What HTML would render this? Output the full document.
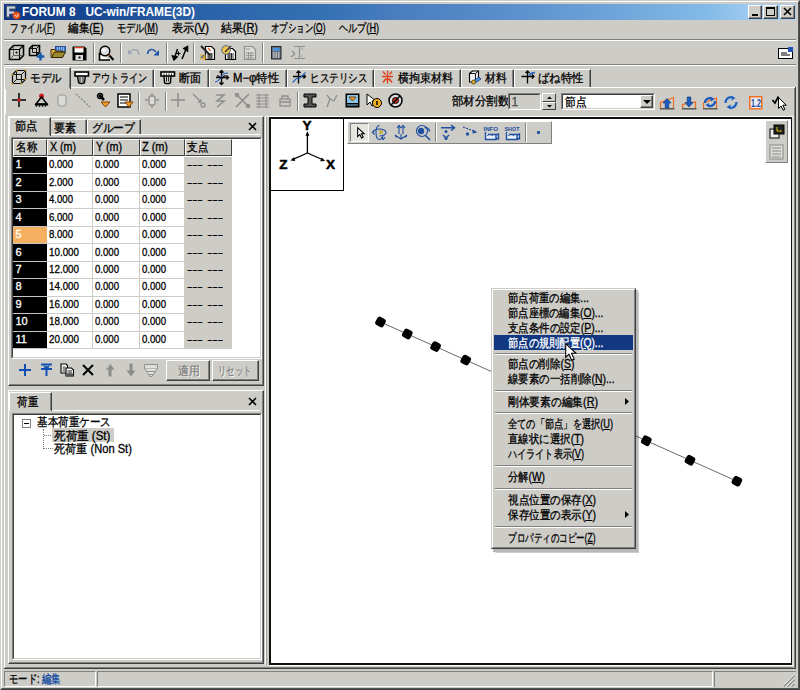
<!DOCTYPE html>
<html><head><meta charset="utf-8">
<style>
*{margin:0;padding:0;box-sizing:border-box}
html,body{width:800px;height:690px;overflow:hidden;background:#cdccc7;font-family:"Liberation Sans",sans-serif;font-size:12px;color:#000}
.a{position:absolute}
.t{position:absolute;white-space:nowrap;line-height:12px;font-size:12px}
.n{font-size:11px}
.t{-webkit-text-stroke:0.3px currentColor}
.hl{position:absolute;height:1px;background:#808080}
.hw{position:absolute;height:1px;background:#fff}
.vl{position:absolute;width:1px;background:#808080}
.vw{position:absolute;width:1px;background:#fff}
svg{position:absolute;overflow:visible}
.cell{position:absolute;height:17.45px;line-height:17px;font-size:11px;padding-left:2px;white-space:nowrap;overflow:hidden}
.mi{position:absolute;left:507px;font-size:12px;line-height:12px;white-space:nowrap}
.ms{position:absolute;left:495px;width:137px;height:1px;background:#808080;border-bottom:1px solid #fff;height:2px}
</style></head><body>
<!-- window frame -->
<div class="a" style="left:0;top:0;width:800px;height:690px;border-top:1px solid #cdccc7;border-left:1px solid #cdccc7;border-right:1px solid #404040;border-bottom:1px solid #404040"></div>
<div class="a" style="left:1px;top:1px;width:798px;height:688px;border-top:1px solid #fff;border-left:1px solid #fff;border-right:1px solid #555;border-bottom:1px solid #555"></div>

<!-- title bar -->
<div class="a" style="left:4px;top:4px;width:792px;height:16px;background:linear-gradient(to right,#0e3680 0%,#1a4a94 12%,#2a62a8 25%,#3470b4 40%,#4a7ec0 50%,#5a90cc 64%,#72aadc 80%,#80b8e6 88%,#9ccaf0 94%,#a6cef2 100%)"></div>
<svg style="left:5px;top:4px" width="16" height="16"><path d="M1.5 2h9v3h-6v2h5v3h-5v3h-3z" fill="#c8d4e8" stroke="#505868" stroke-width="1"/><circle cx="11.5" cy="11.5" r="3.8" fill="#e8501a"/><path d="M10 11l1.5 2 2-3" stroke="#fff" stroke-width="1" fill="none"/></svg>
<div class="t" style="left:22px;top:6px;color:#fff;font-weight:bold;font-size:12px;transform:scaleX(0.9905);transform-origin:0 0;-webkit-text-stroke:0">FORUM 8&nbsp;&nbsp; UC-win/FRAME(3D)</div>
<!-- title buttons -->
<div class="a" style="left:748px;top:5px;width:14px;height:14px;background:#cdccc7;border-top:1px solid #fff;border-left:1px solid #fff;border-right:1px solid #404040;border-bottom:1px solid #404040;box-shadow:inset -1px -1px 0 #808080"></div>
<div class="a" style="left:752px;top:14px;width:6px;height:2px;background:#000"></div>
<div class="a" style="left:763px;top:5px;width:14.5px;height:14px;background:#cdccc7;border-top:1px solid #fff;border-left:1px solid #fff;border-right:1px solid #404040;border-bottom:1px solid #404040;box-shadow:inset -1px -1px 0 #808080"></div>
<div class="a" style="left:766px;top:7px;width:9px;height:9px;border:1px solid #000;border-top:2px solid #000"></div>
<div class="a" style="left:779.5px;top:5px;width:15.5px;height:14px;background:#cdccc7;border-top:1px solid #fff;border-left:1px solid #fff;border-right:1px solid #404040;border-bottom:1px solid #404040;box-shadow:inset -1px -1px 0 #808080"></div>
<svg style="left:783px;top:8px" width="9" height="8"><path d="M1 0L8 7M8 0L1 7" stroke="#000" stroke-width="1.6"/></svg>

<!-- menu -->
<div class="t" style="left:10px;top:22px;transform:scaleX(0.7104);transform-origin:0 0;">ファイル(<u>F</u>)</div>
<div class="t" style="left:68px;top:22px;transform:scaleX(0.8872);transform-origin:0 0;">編集(<u>E</u>)</div>
<div class="t" style="left:117px;top:22px;transform:scaleX(0.7593);transform-origin:0 0;">モデル(<u>M</u>)</div>
<div class="t" style="left:172px;top:22px;transform:scaleX(0.9246);transform-origin:0 0;">表示(<u>V</u>)</div>
<div class="t" style="left:221px;top:22px;transform:scaleX(0.9097);transform-origin:0 0;">結果(<u>R</u>)</div>
<div class="t" style="left:271px;top:22px;transform:scaleX(0.7046);transform-origin:0 0;">オプション(<u>O</u>)</div>
<div class="t" style="left:339px;top:22px;transform:scaleX(0.7594);transform-origin:0 0;">ヘルプ(<u>H</u>)</div>

<!-- separators -->
<div class="hl" style="left:4px;top:39px;width:792px"></div>
<div class="hw" style="left:4px;top:40px;width:792px"></div>
<div class="hl" style="left:4px;top:64px;width:792px"></div>
<div class="hw" style="left:4px;top:65px;width:792px"></div>

<!-- toolbar 1 -->
<svg style="left:8px;top:44px" width="17" height="17" fill="none" stroke="#000"><path d="M1.5 5.5L5.5 1.5H15.5V11.5L11.5 15.5H1.5Z" stroke-width="1.6"/><path d="M1.5 5.5H11.5V15.5M11.5 5.5L15.5 1.5" stroke-width="1.1"/><path d="M5.5 1.5V11.5H15.5M5.5 11.5L1.5 15.5" stroke-width="0.8" stroke="#444"/><circle cx="8.5" cy="8.5" r="1" fill="#000" stroke="none"/></svg>
<svg style="left:28px;top:44px" width="18" height="17" fill="none" stroke="#000"><path d="M1.5 4.5L4.5 1.5H11.5V8.5L8.5 11.5H1.5Z" stroke-width="1.6"/><path d="M1.5 4.5H8.5V11.5M8.5 4.5L11.5 1.5M4.5 1.5V8.5H11.5" stroke-width="0.9"/><path d="M12.5 8.5v8M8.8 12.5h7.5" stroke="#1a58b0" stroke-width="2.4"/></svg>
<svg style="left:50px;top:45px" width="17" height="14"><rect x="5.5" y="1.5" width="10" height="5" fill="#3a78d0" stroke="#1a3c80" stroke-width="0.8"/><path d="M7 3h1M9 3h1M11 3h1M13 3h1M7 5h1M9 5h1M11 5h1M13 5h1" stroke="#fff" stroke-width="0.9"/><path d="M1 4.5h4l1 1.5h6v6.5H1z" fill="#d8b040" stroke="#403010" stroke-width="1"/><path d="M1.5 12.5l3-5.5h11l-3 5.5z" fill="#9c8c30" stroke="#302000" stroke-width="1"/></svg>
<svg style="left:71.5px;top:45.5px" width="15" height="15"><path d="M0.5 0.5h12l2 2v12h-14z" fill="#000"/><rect x="2.5" y="1" width="9" height="5.5" fill="#fff"/><rect x="2.5" y="1" width="9" height="1.3" fill="#e04020"/><rect x="3.5" y="9" width="7.5" height="5" fill="#ddd"/><rect x="6.5" y="10.5" width="2" height="2" fill="#000"/></svg>
<div class="vl" style="left:93px;top:43px;height:20px"></div><div class="vw" style="left:94px;top:43px;height:20px"></div>
<svg style="left:97.5px;top:44.5px" width="17" height="17"><path d="M1.5 7.5v7.5h10.5" fill="#fff" stroke="#000" stroke-width="1.6"/><path d="M1.5 9.5h9" stroke="#000" stroke-width="1"/><circle cx="7" cy="6" r="4.8" fill="#dcdcdc" stroke="#000" stroke-width="1.4"/><circle cx="6" cy="5" r="1.8" fill="#fff"/><path d="M10.5 9.5l5 5.5" stroke="#000" stroke-width="2"/><path d="M10 11l2-1" stroke="#e07020" stroke-width="1"/></svg>
<div class="vl" style="left:120px;top:43px;height:20px"></div><div class="vw" style="left:121px;top:43px;height:20px"></div>
<svg style="left:126.5px;top:47px" width="14" height="11" fill="none" stroke="#9aa4b4" stroke-width="1.3"><path d="M3 5c3-4 9-3 9 3"/><path d="M1 2.5v4.5h4.5z" fill="#9aa4b4" stroke="none"/></svg>
<svg style="left:146px;top:47px" width="14" height="11" fill="none" stroke="#1a50a8" stroke-width="1.5"><path d="M10 5C7 1 2 2 1.5 7"/><path d="M13 3v5.5H7.5z" fill="#1a50a8" stroke="none"/></svg>
<div class="vl" style="left:166px;top:43px;height:20px"></div><div class="vw" style="left:167px;top:43px;height:20px"></div>
<svg style="left:172px;top:46px" width="17" height="15" fill="none" stroke="#000" stroke-width="1.5"><path d="M2 13.5L5.5 3M10 13L14.5 2"/><path d="M0.5 10l1.5 4 3-3z" fill="#000"/><path d="M12 2.5L15.5 0.5 15.5 5z" fill="#000"/><path d="M4.5 7.5h4M6.5 5.5v4" stroke-width="1.2"/></svg>
<div class="vl" style="left:193px;top:43px;height:20px"></div><div class="vw" style="left:194px;top:43px;height:20px"></div>
<svg style="left:199.5px;top:45px" width="16" height="16"><path d="M5.5 1.5h6l3 3v10h-9z" fill="#fff" stroke="#000" stroke-width="1.2"/><path d="M7 9h6M7 11h6M7 13h6M9 8v6M11 8v6" stroke="#000" stroke-width="0.8"/><path d="M1 1l9 9" stroke="#222" stroke-width="2"/><path d="M0.5 9.5h5v5h-5z" fill="#e8b030"/><path d="M1 13l3-3" stroke="#3070c0" stroke-width="1.2"/><path d="M8 3l3 3" stroke="#e06020" stroke-width="1.2"/></svg>
<svg style="left:220.5px;top:45px" width="16" height="16"><path d="M4.5 3.5h7l3 3v8h-10z" fill="#fff" stroke="#000" stroke-width="1.2"/><path d="M6 9h7M6 11h7M6 13h7M8 8v6M10.5 8v6" stroke="#000" stroke-width="0.8"/><circle cx="5" cy="5" r="4.3" fill="#f0c850" stroke="#506080" stroke-width="1"/><path d="M4 7L10 1" stroke="#333" stroke-width="1.5"/></svg>
<svg style="left:242.5px;top:45px" width="14" height="16" opacity="0.5"><path d="M1.5 1.5h8l3 3v10h-11z" fill="#e8e8e8" stroke="#555" stroke-width="1.2"/><path d="M3 8h8M3 10.5h8M3 13h8M5.5 7v7M8 7v7M3 4h4" stroke="#555" stroke-width="0.9"/></svg>
<div class="vl" style="left:262px;top:43px;height:20px"></div><div class="vw" style="left:263px;top:43px;height:20px"></div>
<svg style="left:271px;top:45.5px" width="11" height="14"><rect x="0.5" y="0.5" width="9.5" height="12.5" fill="#686c78" stroke="#202430"/><rect x="2" y="2" width="6.5" height="3" fill="#4a90e0"/><path d="M2 7h1.5M4.5 7h1.5M7 7h1.5M2 9h1.5M4.5 9h1.5M7 9h1.5M2 11h1.5M4.5 11h1.5M7 11h1.5" stroke="#fff" stroke-width="1.1"/></svg>
<svg style="left:289.5px;top:45px" width="16" height="16" opacity="0.5" fill="none" stroke="#555" stroke-width="1.2"><path d="M4 1.5h11M9.5 1.5v12M4 13.5h11M2 6l3 3M1 12l4-3"/><path d="M11 4h2M11 11h2" stroke-width="0.8"/></svg>
<svg style="left:778px;top:47px" width="16" height="12"><rect x="0.5" y="1.5" width="14" height="10" fill="#fff" stroke="#000"/><path d="M3 6h6M3 8h9" stroke="#000"/><rect x="10" y="0" width="5" height="5" fill="#2050b0"/></svg>

<!-- main tab strip -->
<!-- page panel -->
<div class="a" style="left:5px;top:87px;width:791px;height:27px;border-top:1px solid #fff;border-left:1px solid #fff;border-right:1px solid #404040"></div>
<div class="vl" style="left:794px;top:88px;height:26px"></div>
<!-- inactive tabs -->
<div class="a" style="left:70px;top:69px;width:84px;height:18px;border-top:1px solid #fff;border-right:1px solid #404040"></div>
<div class="vl" style="left:152px;top:70px;height:17px"></div>
<div class="a" style="left:154px;top:69px;width:55px;height:18px;border-top:1px solid #fff;border-left:1px solid #fff;border-right:1px solid #404040"></div>
<div class="vl" style="left:207px;top:70px;height:17px"></div>
<div class="a" style="left:209px;top:69px;width:78px;height:18px;border-top:1px solid #fff;border-left:1px solid #fff;border-right:1px solid #404040"></div>
<div class="vl" style="left:285px;top:70px;height:17px"></div>
<div class="a" style="left:287px;top:69px;width:87px;height:18px;border-top:1px solid #fff;border-left:1px solid #fff;border-right:1px solid #404040"></div>
<div class="vl" style="left:372px;top:70px;height:17px"></div>
<div class="a" style="left:374px;top:69px;width:87px;height:18px;border-top:1px solid #fff;border-left:1px solid #fff;border-right:1px solid #404040"></div>
<div class="vl" style="left:459px;top:70px;height:17px"></div>
<div class="a" style="left:461px;top:69px;width:53px;height:18px;border-top:1px solid #fff;border-left:1px solid #fff;border-right:1px solid #404040"></div>
<div class="vl" style="left:512px;top:70px;height:17px"></div>
<div class="a" style="left:514px;top:69px;width:77px;height:18px;border-top:1px solid #fff;border-left:1px solid #fff;border-right:1px solid #404040"></div>
<div class="vl" style="left:589px;top:70px;height:17px"></div>
<!-- active tab -->
<div class="a" style="left:4px;top:67px;width:67px;height:22px;border-top-left-radius:2px;background:#cdccc7;border-top:1px solid #fff;border-left:1px solid #fff;border-right:1px solid #404040"></div>
<div class="vl" style="left:69px;top:68px;height:20px"></div>

<svg style="left:11px;top:69px" width="16" height="16" fill="none" stroke="#000" stroke-width="1.2"><path d="M1.5 5.5L5.5 1.5H14.5V10.5L10.5 14.5H1.5Z"/><path d="M1.5 5.5H10.5V14.5M10.5 5.5L14.5 1.5M5.5 1.5V10.5H14.5M5.5 10.5L1.5 14.5" stroke-width="0.9"/><g fill="#c0a020" stroke="none"><circle cx="1.5" cy="5.5" r="1.1"/><circle cx="5.5" cy="1.5" r="1.1"/><circle cx="14.5" cy="1.5" r="1.1"/><circle cx="14.5" cy="10.5" r="1.1"/><circle cx="10.5" cy="14.5" r="1.1"/><circle cx="1.5" cy="14.5" r="1.1"/></g></svg>
<div class="t" style="left:30px;top:72px;transform:scaleX(0.8750);transform-origin:0 0;">モデル</div>
<svg style="left:73.5px;top:71px" width="16" height="14" fill="none" stroke="#000"><rect x="1" y="1" width="13.5" height="4" fill="#fff" stroke-width="1.6"/><path d="M3.5 5l1 6c0 2 6 2 6 0l1-6" stroke-width="1.4"/><path d="M6 6v5M9 6v5" stroke-width="0.8"/></svg>
<div class="t" style="left:92.4px;top:72px;transform:scaleX(0.7639);transform-origin:0 0;">アウトライン</div>
<svg style="left:160px;top:71px" width="16" height="14" fill="none" stroke="#000"><rect x="1" y="1" width="13.5" height="4" fill="#fff" stroke-width="1.6"/><path d="M4 2.5v2M6.5 2.5v2M9 2.5v2M11.5 2.5v2" stroke-width="0.8"/><path d="M4 5l0.5 6.5c0 1.5 6 1.5 6 0l0.5-6.5" stroke-width="1.4"/><path d="M6.5 6v4.5M8.5 6v4.5" stroke-width="0.8"/></svg>
<div class="t" style="left:178.5px;top:72px;transform:scaleX(0.9167);transform-origin:0 0;">断面</div>
<svg style="left:213.5px;top:70px" width="16" height="15" fill="none" stroke="#000" stroke-width="1.3"><path d="M7.5 0.5v14M5.5 2.5l2-2 2 2M5.5 12.5l2 2 2-2M2 7.5h12.5M12.5 5.5l2 2-2 2"/><path d="M1 12c3 0 4-2 6-5s3-4 7-4" stroke="#2060c0" stroke-width="1.1"/><path d="M3 6c2-1 3 3 5 2s2-3 4-2" stroke-width="1.1"/></svg>
<div class="t" style="left:232.5px;top:72px;transform:scaleX(0.9427);transform-origin:0 0;">M−φ特性</div>
<svg style="left:292px;top:70px" width="16" height="14" fill="none" stroke="#000" stroke-width="1.3"><path d="M6.5 1v12.5M4.5 3l2-2 2 2M1 6.5h12.5M11.5 4.5l2 2-2 2"/><path d="M0.5 12.5l4-4h3l6-6" stroke="#2060c0" stroke-width="1.1"/></svg>
<div class="t" style="left:310px;top:72px;transform:scaleX(0.7917);transform-origin:0 0;">ヒステリシス</div>
<svg style="left:381px;top:70px" width="13" height="14" fill="none" stroke="#e04018" stroke-width="1.3"><path d="M6.5 0.5v13M2 1.5l2.5 3M11 1.5l-2.5 3M1 6.5h11M2 12.5l3-4M11 12.5l-3-4M4 9.5h5" /></svg>
<div class="t" style="left:398.4px;top:72px;transform:scaleX(0.9167);transform-origin:0 0;">横拘束材料</div>
<svg style="left:468px;top:69.5px" width="14" height="15"><path d="M1.5 3.5l3-2.5h6v8l-3 3h-6z" fill="#eceef4" stroke="#000" stroke-width="1.1"/><path d="M1.5 3.5h6v9M7.5 3.5l3-2.5" fill="none" stroke="#000" stroke-width="0.9"/><path d="M5 11l6-4 2 2-6 4z" fill="#4a90e0" stroke="#103070" stroke-width="0.8"/><circle cx="5.5" cy="12" r="2" fill="#e0b020" stroke="#403000" stroke-width="0.7"/></svg>
<div class="t" style="left:485.4px;top:72px;transform:scaleX(0.9000);transform-origin:0 0;">材料</div>
<svg style="left:520.5px;top:70px" width="15" height="14" fill="none" stroke="#000" stroke-width="1.3"><path d="M6.5 1v12.5M4.5 3l2-2 2 2M0.5 6.5h12.5M11 4.5l2 2-2 2"/><path d="M8 5.5c1.5-2 3-3 6-3" stroke="#2060c0" stroke-width="1.3"/></svg>
<div class="t" style="left:537.6px;top:72px;transform:scaleX(0.9375);transform-origin:0 0;">ばね特性</div>

<!-- toolbar 2 -->
<svg style="left:12px;top:93px" width="14" height="14"><path d="M7 0v14M0 7h14" stroke="#000" stroke-width="1.5"/><rect x="5.5" y="5.5" width="3" height="3" fill="#d02020"/></svg>
<svg style="left:34px;top:93px" width="15" height="15"><circle cx="7.5" cy="3" r="2.5" fill="#d02020"/><path d="M7.5 4L2 11h11z" fill="none" stroke="#000" stroke-width="1.5"/><path d="M1 11.5h13" stroke="#000" stroke-width="2"/><path d="M2 14l1-2M5 14l1-2M8 14l1-2M11 14l1-2" stroke="#000"/></svg>
<svg style="left:57px;top:94px" width="10" height="13" opacity="0.45"><rect x="1" y="1" width="8" height="11" rx="2" fill="#eee" stroke="#555"/></svg>
<svg style="left:75px;top:93px" width="16" height="15" opacity="0.45" fill="none" stroke="#444" stroke-width="1.5"><path d="M1 1l14 13" stroke-dasharray="2 1.5"/></svg>
<svg style="left:97px;top:93px" width="14" height="15"><path d="M2 2l5 5" stroke="#000" stroke-width="2.5"/><path d="M4 9h9l-4.5 5z" fill="#f0a020" stroke="#804000"/><circle cx="3" cy="3" r="2.5" fill="none" stroke="#000" stroke-width="1.5"/></svg>
<svg style="left:117px;top:93px" width="16" height="15"><rect x="1" y="1" width="12" height="13" fill="#fff" stroke="#000" stroke-width="1.5"/><path d="M3 4h8M3 7h8M3 10h8" stroke="#000"/><path d="M8 9h8l-4 5z" fill="#f0a020" stroke="#804000"/></svg>
<div class="vl" style="left:138px;top:92px;height:19px"></div><div class="vw" style="left:139px;top:92px;height:19px"></div>
<svg style="left:145px;top:93px" width="14" height="15" opacity="0.4"><rect x="4" y="3" width="6" height="9" rx="2" fill="#eee" stroke="#333" stroke-width="1.3"/><path d="M0 7h4M10 7h4M7 0v3M7 12v3" stroke="#333" stroke-width="1.3"/></svg>
<div class="vl" style="left:165px;top:92px;height:19px"></div><div class="vw" style="left:166px;top:92px;height:19px"></div>
<svg style="left:171px;top:93px" width="14" height="14" opacity="0.4"><path d="M7 0v14M0 7h14" stroke="#333" stroke-width="1.5"/></svg>
<svg style="left:192px;top:93px" width="14" height="15" opacity="0.4" fill="none" stroke="#333" stroke-width="1.3"><path d="M1 1l8 8M9 9v-3M9 9h-3"/><circle cx="11" cy="12" r="2"/></svg>
<svg style="left:214px;top:93px" width="12" height="15" opacity="0.4" fill="none" stroke="#333" stroke-width="1.6"><path d="M2 2h8L3 8h7l-7 6"/></svg>
<svg style="left:235px;top:93px" width="15" height="15" opacity="0.4" fill="none" stroke="#333" stroke-width="1.6"><path d="M1 1l13 13M14 1L1 14"/><circle cx="2" cy="2" r="1.5"/><circle cx="13" cy="13" r="1.5"/></svg>
<svg style="left:255px;top:93px" width="15" height="15" opacity="0.4" fill="none" stroke="#333" stroke-width="1.2"><path d="M1 2h13M1 5h13M1 8h13M1 11h13M1 14h13M4 1v14M11 1v14"/></svg>
<svg style="left:279px;top:94px" width="12" height="13" opacity="0.4" fill="none" stroke="#333" stroke-width="1.3"><rect x="1" y="5" width="10" height="7"/><path d="M3 5V2h6v3M1 8h10"/></svg>
<div class="vl" style="left:297px;top:92px;height:19px"></div><div class="vw" style="left:298px;top:92px;height:19px"></div>
<svg style="left:303px;top:93px" width="14" height="15"><path d="M1 1h12v3H9v7h4v3H1v-3h4V4H1z" fill="#555" stroke="#000"/></svg>
<svg style="left:325px;top:93px" width="14" height="15" opacity="0.4" fill="none" stroke="#333" stroke-width="1.3"><path d="M2 14l3-8 4 2 3-6M5 6l-3-4"/></svg>
<svg style="left:345px;top:93px" width="15" height="15"><rect x="0.5" y="0.5" width="14" height="14" fill="#000"/><rect x="2" y="2" width="11" height="8" fill="#8ac4e8"/><path d="M4 4h7l-3.5 4z" fill="#f0a020" stroke="#603000" stroke-width="0.8"/><path d="M2 12h11" stroke="#8ac4e8"/></svg>
<svg style="left:366px;top:93px" width="16" height="15"><path d="M1 1v11l3-3 2 4 2-1-2-4h4z" fill="#fff" stroke="#000"/><circle cx="11" cy="10" r="4.5" fill="#f0b020" stroke="#000"/><path d="M11 8v4" stroke="#000" stroke-width="1.5"/></svg>
<svg style="left:388px;top:93px" width="15" height="15"><circle cx="7.5" cy="7.5" r="6.5" fill="#ddd" stroke="#000" stroke-width="1.5"/><circle cx="7.5" cy="7.5" r="3" fill="#d03020" stroke="#000"/><path d="M3 12l9-9" stroke="#000" stroke-width="1.5"/></svg>

<div class="t" style="left:451.6px;top:95px;transform:scaleX(0.9567);transform-origin:0 0;">部材分割数</div>
<div class="a" style="left:508px;top:93px;width:33px;height:17px;background:#cdccc7;border-top:1px solid #808080;border-left:1px solid #808080;border-right:1px solid #fff;border-bottom:1px solid #fff"></div>
<div class="a" style="left:509px;top:94px;width:31px;height:15px;border-top:1px solid #404040;border-left:1px solid #404040;border-right:1px solid #cdccc7;border-bottom:1px solid #cdccc7"></div>
<div class="t" style="left:511.5px;top:96px;color:#505050">1</div>
<div class="a" style="left:542px;top:93px;width:14px;height:8.5px;border-top:1px solid #fff;border-left:1px solid #fff;border-right:1px solid #404040;border-bottom:1px solid #404040"></div>
<div class="a" style="left:542px;top:101.5px;width:14px;height:8.5px;border-top:1px solid #fff;border-left:1px solid #fff;border-right:1px solid #404040;border-bottom:1px solid #404040"></div>
<svg style="left:546px;top:95.5px" width="7" height="13"><path d="M1 3h5L3.5 0.5z M1 9h5L3.5 11.5z" fill="#000"/></svg>
<div class="a" style="left:561px;top:93px;width:94px;height:17px;background:#fff;border-top:1px solid #808080;border-left:1px solid #808080;border-right:1px solid #fff;border-bottom:1px solid #fff"></div>
<div class="a" style="left:562px;top:94px;width:92px;height:15px;border-top:1px solid #404040;border-left:1px solid #404040;border-right:1px solid #cdccc7;border-bottom:1px solid #cdccc7"></div>
<div class="t" style="left:564.5px;top:96px;transform:scaleX(0.8917);transform-origin:0 0;">節点</div>
<div class="a" style="left:640px;top:95px;width:13px;height:13px;background:#cdccc7;border-top:1px solid #fff;border-left:1px solid #fff;border-right:1px solid #404040;border-bottom:1px solid #404040;box-shadow:inset -1px -1px 0 #808080"></div>
<svg style="left:643px;top:100px" width="8" height="4"><path d="M0 0h8L4 4z" fill="#000"/></svg>

<svg style="left:659px;top:95.5px" width="16" height="14"><path d="M1.5 12V6.5L14.5 1.5V12" fill="none" stroke="#f06a20" stroke-width="1.2"/><path d="M8 2.5l4 4.5H9.8v5H6.2V7H4z" fill="#1a5cc0" stroke="#0a3070" stroke-width="0.6"/><path d="M1 12.8h14.5" stroke="#505050" stroke-width="1.4"/></svg>
<svg style="left:680.5px;top:95.5px" width="16" height="14"><path d="M1.5 12V8.5L14.5 6V12" fill="none" stroke="#f06a20" stroke-width="1.2"/><path d="M6.2 1h3.6v5.5H12l-4 4.5-4-4.5h2.2z" fill="#1a5cc0" stroke="#0a3070" stroke-width="0.6"/><path d="M1 12.8h14.5" stroke="#505050" stroke-width="1.4"/></svg>
<svg style="left:702px;top:94.5px" width="16" height="15"><path d="M1.5 13V8L14.5 3V13" fill="none" stroke="#f06a20" stroke-width="1.2"/><path d="M3 8c0-4 4-6 7-4" fill="none" stroke="#1a5cc0" stroke-width="2.2"/><path d="M8.5 1.5l4 2.5-3.5 2.5z" fill="#1a5cc0"/><path d="M13 6c0 4-4 6-7 4.5" fill="none" stroke="#1a5cc0" stroke-width="2.2"/><path d="M7.5 12.5l-4-2.5 3.5-2z" fill="#1a5cc0"/><path d="M1 13.8h14.5" stroke="#505050" stroke-width="1.4"/></svg>
<svg style="left:723px;top:94.5px" width="16" height="15"><path d="M2.5 8c0-4 3-6.5 7-5.5" fill="none" stroke="#1a5cc0" stroke-width="2.2"/><path d="M8 0.5l4.5 2.5-4 2.5z" fill="#1a5cc0"/><path d="M13.5 7c0 4-3 6.5-7 5.5" fill="none" stroke="#1a5cc0" stroke-width="2.2"/><path d="M8 14.5l-4.5-2.5 4-2.5z" fill="#1a5cc0"/><path d="M5 6c1-2 3-2.5 4-2M11 9c-1 2-3 2.5-4 2" stroke="#9cc4f0" stroke-width="0.8" fill="none"/></svg>
<svg style="left:749px;top:95.5px" width="14" height="14"><rect x="0.75" y="0.75" width="12" height="12" fill="#e8ecf4" stroke="#f07020" stroke-width="1.5"/><text x="2" y="11" font-size="10.5" font-family="Liberation Sans" fill="#1a4ca8" font-weight="bold" textLength="10" lengthAdjust="spacingAndGlyphs">1.2</text></svg>
<svg style="left:772px;top:94.5px" width="16" height="16"><path d="M0.5 5l2.5 3 3.5-6.5" fill="none" stroke="#000" stroke-width="1.8"/><path d="M6.5 2.5v11l2.6-2.5 2 4.2 1.7-0.8-2-4.2h3.5z" fill="#fff" stroke="#000" stroke-width="1"/></svg>

<!-- LEFT PANEL (nodes) -->
<div class="a" style="left:8px;top:116px;width:256px;height:270px;border-top:1px solid #fff;border-left:1px solid #fff;border-right:1px solid #404040;border-bottom:1px solid #404040"></div>
<div class="hl" style="left:9px;top:384px;width:254px"></div>
<div class="vl" style="left:262px;top:117px;height:268px"></div>
<!-- panel tabs -->
<div class="a" style="left:10px;top:134px;width:250px;height:1px;background:#fff"></div>
<div class="a" style="left:51px;top:119px;width:36px;height:15px;border-top:1px solid #fff;border-right:1px solid #404040"></div>
<div class="vl" style="left:85px;top:120px;height:14px"></div>
<div class="a" style="left:87px;top:119px;width:54px;height:15px;border-top:1px solid #fff;border-left:1px solid #fff;border-right:1px solid #404040"></div>
<div class="vl" style="left:139px;top:120px;height:14px"></div>
<div class="a" style="left:9px;top:117px;width:42px;height:19px;background:#cdccc7;border-top:1px solid #fff;border-left:1px solid #fff;border-right:1px solid #404040"></div>
<div class="vl" style="left:49px;top:118px;height:17px"></div>
<div class="t" style="left:15px;top:120px;transform:scaleX(0.9375);transform-origin:0 0;">節点</div>
<div class="t" style="left:54px;top:122px;transform:scaleX(0.9167);transform-origin:0 0;">要素</div>
<div class="t" style="left:92.25px;top:122px;transform:scaleX(0.8906);transform-origin:0 0;">グループ</div>
<svg style="left:248px;top:122px" width="9" height="9"><path d="M1 1l7 7M8 1L1 8" stroke="#000" stroke-width="1.6"/></svg>

<!-- grid frame -->
<div class="a" style="left:11px;top:137px;width:251px;height:222px;border-top:1px solid #808080;border-left:1px solid #808080;border-right:1px solid #fff;border-bottom:1px solid #fff"></div>
<div class="a" style="left:12px;top:138px;width:249px;height:220px;background:#fff;border-top:1px solid #404040;border-left:1px solid #404040;border-right:1px solid #cdccc7;border-bottom:1px solid #cdccc7"></div>
<div class="a" style="left:13px;top:139px;width:34px;height:17px;background:#cdccc7;border-top:1px solid #fff;border-left:1px solid #fff;border-right:1px solid #404040;border-bottom:1px solid #404040"></div><div class="t" style="left:15.5px;top:141px;transform:scaleX(0.8750);transform-origin:0 0;">名称</div><div class="a" style="left:47px;top:139px;width:46px;height:17px;background:#cdccc7;border-top:1px solid #fff;border-left:1px solid #fff;border-right:1px solid #404040;border-bottom:1px solid #404040"></div><div class="t" style="left:49.5px;top:141px;transform:scaleX(0.8865);transform-origin:0 0;">X (m)</div><div class="a" style="left:93px;top:139px;width:46.5px;height:17px;background:#cdccc7;border-top:1px solid #fff;border-left:1px solid #fff;border-right:1px solid #404040;border-bottom:1px solid #404040"></div><div class="t" style="left:95.5px;top:141px;transform:scaleX(0.8932);transform-origin:0 0;">Y (m)</div><div class="a" style="left:139.5px;top:139px;width:45.0px;height:17px;background:#cdccc7;border-top:1px solid #fff;border-left:1px solid #fff;border-right:1px solid #404040;border-bottom:1px solid #404040"></div><div class="t" style="left:142.0px;top:141px;transform:scaleX(0.9073);transform-origin:0 0;">Z (m)</div><div class="a" style="left:184.5px;top:139px;width:47.5px;height:17px;background:#cdccc7;border-top:1px solid #fff;border-left:1px solid #fff;border-right:1px solid #404040;border-bottom:1px solid #404040"></div><div class="t" style="left:187.0px;top:141px;transform:scaleX(0.8750);transform-origin:0 0;">支点</div><div class="a" style="left:13px;top:157.00px;width:34px;height:17.45px;background:#000;border-bottom:1px solid #c4c4c4"></div><div class="t n" style="left:15.5px;top:158.30px;color:#fff">1</div><div class="a" style="left:47px;top:157.00px;width:46px;height:17.45px;border-right:1px solid #cdccc7;border-bottom:1px solid #cdccc7"></div><div class="t n" style="left:49.3px;top:158.30px;transform:scaleX(0.8717);transform-origin:0 0;">0.000</div><div class="a" style="left:93px;top:157.00px;width:46.5px;height:17.45px;border-right:1px solid #cdccc7;border-bottom:1px solid #cdccc7"></div><div class="t n" style="left:95.3px;top:158.30px;transform:scaleX(0.8717);transform-origin:0 0;">0.000</div><div class="a" style="left:139.5px;top:157.00px;width:45.0px;height:17.45px;border-right:1px solid #cdccc7;border-bottom:1px solid #cdccc7"></div><div class="t n" style="left:141.8px;top:158.30px;transform:scaleX(0.8717);transform-origin:0 0;">0.000</div><div class="a" style="left:184.5px;top:157.00px;width:47.5px;height:17.45px;background:#cdccc7;border-bottom:1px solid #cdccc7"></div><div class="t n" style="left:187px;top:158.30px;transform:scaleX(1.4373);transform-origin:0 0;">--- ---</div><div class="a" style="left:13px;top:174.45px;width:34px;height:17.45px;background:#000;border-bottom:1px solid #c4c4c4"></div><div class="t n" style="left:15.5px;top:175.75px;color:#fff">2</div><div class="a" style="left:47px;top:174.45px;width:46px;height:17.45px;border-right:1px solid #cdccc7;border-bottom:1px solid #cdccc7"></div><div class="t n" style="left:49.3px;top:175.75px;transform:scaleX(0.8717);transform-origin:0 0;">2.000</div><div class="a" style="left:93px;top:174.45px;width:46.5px;height:17.45px;border-right:1px solid #cdccc7;border-bottom:1px solid #cdccc7"></div><div class="t n" style="left:95.3px;top:175.75px;transform:scaleX(0.8717);transform-origin:0 0;">0.000</div><div class="a" style="left:139.5px;top:174.45px;width:45.0px;height:17.45px;border-right:1px solid #cdccc7;border-bottom:1px solid #cdccc7"></div><div class="t n" style="left:141.8px;top:175.75px;transform:scaleX(0.8717);transform-origin:0 0;">0.000</div><div class="a" style="left:184.5px;top:174.45px;width:47.5px;height:17.45px;background:#cdccc7;border-bottom:1px solid #cdccc7"></div><div class="t n" style="left:187px;top:175.75px;transform:scaleX(1.4373);transform-origin:0 0;">--- ---</div><div class="a" style="left:13px;top:191.91px;width:34px;height:17.45px;background:#000;border-bottom:1px solid #c4c4c4"></div><div class="t n" style="left:15.5px;top:193.21px;color:#fff">3</div><div class="a" style="left:47px;top:191.91px;width:46px;height:17.45px;border-right:1px solid #cdccc7;border-bottom:1px solid #cdccc7"></div><div class="t n" style="left:49.3px;top:193.21px;transform:scaleX(0.8717);transform-origin:0 0;">4.000</div><div class="a" style="left:93px;top:191.91px;width:46.5px;height:17.45px;border-right:1px solid #cdccc7;border-bottom:1px solid #cdccc7"></div><div class="t n" style="left:95.3px;top:193.21px;transform:scaleX(0.8717);transform-origin:0 0;">0.000</div><div class="a" style="left:139.5px;top:191.91px;width:45.0px;height:17.45px;border-right:1px solid #cdccc7;border-bottom:1px solid #cdccc7"></div><div class="t n" style="left:141.8px;top:193.21px;transform:scaleX(0.8717);transform-origin:0 0;">0.000</div><div class="a" style="left:184.5px;top:191.91px;width:47.5px;height:17.45px;background:#cdccc7;border-bottom:1px solid #cdccc7"></div><div class="t n" style="left:187px;top:193.21px;transform:scaleX(1.4373);transform-origin:0 0;">--- ---</div><div class="a" style="left:13px;top:209.36px;width:34px;height:17.45px;background:#000;border-bottom:1px solid #c4c4c4"></div><div class="t n" style="left:15.5px;top:210.66px;color:#fff">4</div><div class="a" style="left:47px;top:209.36px;width:46px;height:17.45px;border-right:1px solid #cdccc7;border-bottom:1px solid #cdccc7"></div><div class="t n" style="left:49.3px;top:210.66px;transform:scaleX(0.8717);transform-origin:0 0;">6.000</div><div class="a" style="left:93px;top:209.36px;width:46.5px;height:17.45px;border-right:1px solid #cdccc7;border-bottom:1px solid #cdccc7"></div><div class="t n" style="left:95.3px;top:210.66px;transform:scaleX(0.8717);transform-origin:0 0;">0.000</div><div class="a" style="left:139.5px;top:209.36px;width:45.0px;height:17.45px;border-right:1px solid #cdccc7;border-bottom:1px solid #cdccc7"></div><div class="t n" style="left:141.8px;top:210.66px;transform:scaleX(0.8717);transform-origin:0 0;">0.000</div><div class="a" style="left:184.5px;top:209.36px;width:47.5px;height:17.45px;background:#cdccc7;border-bottom:1px solid #cdccc7"></div><div class="t n" style="left:187px;top:210.66px;transform:scaleX(1.4373);transform-origin:0 0;">--- ---</div><div class="a" style="left:13px;top:226.82px;width:34px;height:17.45px;background:#f4b060;border-bottom:1px solid #c4c4c4"></div><div class="t n" style="left:15.5px;top:228.12px;color:#fff">5</div><div class="a" style="left:47px;top:226.82px;width:46px;height:17.45px;border-right:1px solid #cdccc7;border-bottom:1px solid #cdccc7"></div><div class="t n" style="left:49.3px;top:228.12px;transform:scaleX(0.8717);transform-origin:0 0;">8.000</div><div class="a" style="left:93px;top:226.82px;width:46.5px;height:17.45px;border-right:1px solid #cdccc7;border-bottom:1px solid #cdccc7"></div><div class="t n" style="left:95.3px;top:228.12px;transform:scaleX(0.8717);transform-origin:0 0;">0.000</div><div class="a" style="left:139.5px;top:226.82px;width:45.0px;height:17.45px;border-right:1px solid #cdccc7;border-bottom:1px solid #cdccc7"></div><div class="t n" style="left:141.8px;top:228.12px;transform:scaleX(0.8717);transform-origin:0 0;">0.000</div><div class="a" style="left:184.5px;top:226.82px;width:47.5px;height:17.45px;background:#cdccc7;border-bottom:1px solid #cdccc7"></div><div class="t n" style="left:187px;top:228.12px;transform:scaleX(1.4373);transform-origin:0 0;">--- ---</div><div class="a" style="left:13px;top:244.27px;width:34px;height:17.45px;background:#000;border-bottom:1px solid #c4c4c4"></div><div class="t n" style="left:15.5px;top:245.57px;color:#fff">6</div><div class="a" style="left:47px;top:244.27px;width:46px;height:17.45px;border-right:1px solid #cdccc7;border-bottom:1px solid #cdccc7"></div><div class="t n" style="left:49.3px;top:245.57px;transform:scaleX(0.8914);transform-origin:0 0;">10.000</div><div class="a" style="left:93px;top:244.27px;width:46.5px;height:17.45px;border-right:1px solid #cdccc7;border-bottom:1px solid #cdccc7"></div><div class="t n" style="left:95.3px;top:245.57px;transform:scaleX(0.8717);transform-origin:0 0;">0.000</div><div class="a" style="left:139.5px;top:244.27px;width:45.0px;height:17.45px;border-right:1px solid #cdccc7;border-bottom:1px solid #cdccc7"></div><div class="t n" style="left:141.8px;top:245.57px;transform:scaleX(0.8717);transform-origin:0 0;">0.000</div><div class="a" style="left:184.5px;top:244.27px;width:47.5px;height:17.45px;background:#cdccc7;border-bottom:1px solid #cdccc7"></div><div class="t n" style="left:187px;top:245.57px;transform:scaleX(1.4373);transform-origin:0 0;">--- ---</div><div class="a" style="left:13px;top:261.73px;width:34px;height:17.45px;background:#000;border-bottom:1px solid #c4c4c4"></div><div class="t n" style="left:15.5px;top:263.03px;color:#fff">7</div><div class="a" style="left:47px;top:261.73px;width:46px;height:17.45px;border-right:1px solid #cdccc7;border-bottom:1px solid #cdccc7"></div><div class="t n" style="left:49.3px;top:263.03px;transform:scaleX(0.8914);transform-origin:0 0;">12.000</div><div class="a" style="left:93px;top:261.73px;width:46.5px;height:17.45px;border-right:1px solid #cdccc7;border-bottom:1px solid #cdccc7"></div><div class="t n" style="left:95.3px;top:263.03px;transform:scaleX(0.8717);transform-origin:0 0;">0.000</div><div class="a" style="left:139.5px;top:261.73px;width:45.0px;height:17.45px;border-right:1px solid #cdccc7;border-bottom:1px solid #cdccc7"></div><div class="t n" style="left:141.8px;top:263.03px;transform:scaleX(0.8717);transform-origin:0 0;">0.000</div><div class="a" style="left:184.5px;top:261.73px;width:47.5px;height:17.45px;background:#cdccc7;border-bottom:1px solid #cdccc7"></div><div class="t n" style="left:187px;top:263.03px;transform:scaleX(1.4373);transform-origin:0 0;">--- ---</div><div class="a" style="left:13px;top:279.18px;width:34px;height:17.45px;background:#000;border-bottom:1px solid #c4c4c4"></div><div class="t n" style="left:15.5px;top:280.48px;color:#fff">8</div><div class="a" style="left:47px;top:279.18px;width:46px;height:17.45px;border-right:1px solid #cdccc7;border-bottom:1px solid #cdccc7"></div><div class="t n" style="left:49.3px;top:280.48px;transform:scaleX(0.8914);transform-origin:0 0;">14.000</div><div class="a" style="left:93px;top:279.18px;width:46.5px;height:17.45px;border-right:1px solid #cdccc7;border-bottom:1px solid #cdccc7"></div><div class="t n" style="left:95.3px;top:280.48px;transform:scaleX(0.8717);transform-origin:0 0;">0.000</div><div class="a" style="left:139.5px;top:279.18px;width:45.0px;height:17.45px;border-right:1px solid #cdccc7;border-bottom:1px solid #cdccc7"></div><div class="t n" style="left:141.8px;top:280.48px;transform:scaleX(0.8717);transform-origin:0 0;">0.000</div><div class="a" style="left:184.5px;top:279.18px;width:47.5px;height:17.45px;background:#cdccc7;border-bottom:1px solid #cdccc7"></div><div class="t n" style="left:187px;top:280.48px;transform:scaleX(1.4373);transform-origin:0 0;">--- ---</div><div class="a" style="left:13px;top:296.64px;width:34px;height:17.45px;background:#000;border-bottom:1px solid #c4c4c4"></div><div class="t n" style="left:15.5px;top:297.94px;color:#fff">9</div><div class="a" style="left:47px;top:296.64px;width:46px;height:17.45px;border-right:1px solid #cdccc7;border-bottom:1px solid #cdccc7"></div><div class="t n" style="left:49.3px;top:297.94px;transform:scaleX(0.8914);transform-origin:0 0;">16.000</div><div class="a" style="left:93px;top:296.64px;width:46.5px;height:17.45px;border-right:1px solid #cdccc7;border-bottom:1px solid #cdccc7"></div><div class="t n" style="left:95.3px;top:297.94px;transform:scaleX(0.8717);transform-origin:0 0;">0.000</div><div class="a" style="left:139.5px;top:296.64px;width:45.0px;height:17.45px;border-right:1px solid #cdccc7;border-bottom:1px solid #cdccc7"></div><div class="t n" style="left:141.8px;top:297.94px;transform:scaleX(0.8717);transform-origin:0 0;">0.000</div><div class="a" style="left:184.5px;top:296.64px;width:47.5px;height:17.45px;background:#cdccc7;border-bottom:1px solid #cdccc7"></div><div class="t n" style="left:187px;top:297.94px;transform:scaleX(1.4373);transform-origin:0 0;">--- ---</div><div class="a" style="left:13px;top:314.09px;width:34px;height:17.45px;background:#000;border-bottom:1px solid #c4c4c4"></div><div class="t n" style="left:15.5px;top:315.39px;color:#fff">10</div><div class="a" style="left:47px;top:314.09px;width:46px;height:17.45px;border-right:1px solid #cdccc7;border-bottom:1px solid #cdccc7"></div><div class="t n" style="left:49.3px;top:315.39px;transform:scaleX(0.8914);transform-origin:0 0;">18.000</div><div class="a" style="left:93px;top:314.09px;width:46.5px;height:17.45px;border-right:1px solid #cdccc7;border-bottom:1px solid #cdccc7"></div><div class="t n" style="left:95.3px;top:315.39px;transform:scaleX(0.8717);transform-origin:0 0;">0.000</div><div class="a" style="left:139.5px;top:314.09px;width:45.0px;height:17.45px;border-right:1px solid #cdccc7;border-bottom:1px solid #cdccc7"></div><div class="t n" style="left:141.8px;top:315.39px;transform:scaleX(0.8717);transform-origin:0 0;">0.000</div><div class="a" style="left:184.5px;top:314.09px;width:47.5px;height:17.45px;background:#cdccc7;border-bottom:1px solid #cdccc7"></div><div class="t n" style="left:187px;top:315.39px;transform:scaleX(1.4373);transform-origin:0 0;">--- ---</div><div class="a" style="left:13px;top:331.55px;width:34px;height:17.45px;background:#000;border-bottom:1px solid #c4c4c4"></div><div class="t n" style="left:15.5px;top:332.85px;color:#fff">11</div><div class="a" style="left:47px;top:331.55px;width:46px;height:17.45px;border-right:1px solid #cdccc7;border-bottom:1px solid #cdccc7"></div><div class="t n" style="left:49.3px;top:332.85px;transform:scaleX(0.8914);transform-origin:0 0;">20.000</div><div class="a" style="left:93px;top:331.55px;width:46.5px;height:17.45px;border-right:1px solid #cdccc7;border-bottom:1px solid #cdccc7"></div><div class="t n" style="left:95.3px;top:332.85px;transform:scaleX(0.8717);transform-origin:0 0;">0.000</div><div class="a" style="left:139.5px;top:331.55px;width:45.0px;height:17.45px;border-right:1px solid #cdccc7;border-bottom:1px solid #cdccc7"></div><div class="t n" style="left:141.8px;top:332.85px;transform:scaleX(0.8717);transform-origin:0 0;">0.000</div><div class="a" style="left:184.5px;top:331.55px;width:47.5px;height:17.45px;background:#cdccc7;border-bottom:1px solid #cdccc7"></div><div class="t n" style="left:187px;top:332.85px;transform:scaleX(1.4373);transform-origin:0 0;">--- ---</div>

<!-- grid buttons -->
<svg style="left:19px;top:364px" width="12" height="12"><path d="M6 0v12M0 6h12" stroke="#1050b0" stroke-width="2"/></svg>
<svg style="left:40px;top:363px" width="13" height="13"><path d="M1 1.5h11M1 6h11M6.5 3v10" stroke="#1050b0" stroke-width="2"/><path d="M4 3l2.5 3 2.5-3" fill="none" stroke="#1050b0" stroke-width="1.5"/></svg>
<svg style="left:59.5px;top:363px" width="15" height="14"><path d="M1 1h5l1.5 1.5V10H1z" fill="#fff" stroke="#000" stroke-width="1.1"/><path d="M2.5 4h3M2.5 6h3M2.5 8h3" stroke="#000" stroke-width="0.8"/><path d="M6 5h5.5l2 2v6H6z" fill="#fff" stroke="#000" stroke-width="1.1"/><path d="M7.5 8h4.5M7.5 10h4.5M7.5 12h4.5" stroke="#000" stroke-width="0.9"/><path d="M6 10.5h7.5v2.5H6z" fill="#555"/></svg>
<svg style="left:82px;top:364px" width="12" height="12"><path d="M1 1l10 10M11 1L1 11" stroke="#000" stroke-width="2"/></svg>
<svg style="left:104.5px;top:363px" width="10" height="14"><path d="M5 0.5L0.5 6.5h3v7h3v-7h3z" fill="#8c8c8c"/><path d="M5 1.5L2 5.5" stroke="#d8d8d8" stroke-width="0.8"/></svg>
<svg style="left:125.5px;top:363px" width="10" height="14"><path d="M5 13.5L0.5 7.5h3v-7h3v7h3z" fill="#8c8c8c"/></svg>
<svg style="left:143px;top:363px" width="16" height="14" opacity="0.6" fill="none" stroke="#666"><path d="M1.5 1.5h13v4h-13z" fill="#eee"/><path d="M1.5 5.5l2 3h9l2-3M3.5 8.5l2 3h5l2-3M5.5 11.5l1.5 2h2l1.5-2" fill="#eee"/></svg>
<div class="a" style="left:166px;top:360px;width:44px;height:21px;border-top:1px solid #fff;border-left:1px solid #fff;border-right:1px solid #404040;border-bottom:1px solid #404040"></div>
<div class="vl" style="left:208px;top:361px;height:19px"></div><div class="hl" style="left:167px;top:379px;width:42px"></div>
<div class="t" style="left:178.2px;top:365px;color:#808080;text-shadow:1px 1px 0 #fff;transform:scaleX(0.8958);transform-origin:0 0;">適用</div>
<div class="a" style="left:212px;top:360px;width:47px;height:21px;border-top:1px solid #fff;border-left:1px solid #fff;border-right:1px solid #404040;border-bottom:1px solid #404040"></div>
<div class="vl" style="left:257px;top:361px;height:19px"></div><div class="hl" style="left:213px;top:379px;width:45px"></div>
<div class="t" style="left:217.9px;top:365px;color:#808080;text-shadow:1px 1px 0 #fff;transform:scaleX(0.6875);transform-origin:0 0;">リセット</div>

<!-- LOAD PANEL -->
<div class="a" style="left:8px;top:390px;width:256px;height:274px;border-top:1px solid #fff;border-left:1px solid #fff;border-right:1px solid #404040;border-bottom:1px solid #404040"></div>
<div class="hl" style="left:9px;top:662px;width:254px"></div>
<div class="vl" style="left:262px;top:391px;height:272px"></div>
<div class="a" style="left:10px;top:410px;width:250px;height:1px;background:#fff"></div>
<div class="a" style="left:9px;top:392px;width:43px;height:19px;background:#cdccc7;border-top:1px solid #fff;border-left:1px solid #fff;border-right:1px solid #404040"></div>
<div class="vl" style="left:50px;top:393px;height:17px"></div>
<div class="t" style="left:16.6px;top:396px;transform:scaleX(0.8750);transform-origin:0 0;">荷重</div>
<svg style="left:248px;top:397px" width="9" height="9"><path d="M1 1l7 7M8 1L1 8" stroke="#000" stroke-width="1.6"/></svg>
<div class="a" style="left:12px;top:413px;width:250px;height:247px;border-top:1px solid #808080;border-left:1px solid #808080;border-right:1px solid #fff;border-bottom:1px solid #fff"></div>
<div class="a" style="left:13px;top:414px;width:248px;height:245px;background:#fff;border-top:1px solid #404040;border-left:1px solid #404040;border-right:1px solid #cdccc7;border-bottom:1px solid #cdccc7"></div>
<div class="a" style="left:22px;top:419px;width:9px;height:9px;border:1px solid #808080;background:#fff"></div>
<div class="a" style="left:24px;top:423px;width:5px;height:1px;background:#000"></div>
<div class="t" style="left:37px;top:416px;transform:scaleX(0.8810);transform-origin:0 0;">基本荷重ケース</div>
<div class="a" style="left:43px;top:429px;width:1px;height:20px;border-left:1px dotted #808080"></div>
<div class="a" style="left:44px;top:435px;width:9px;height:1px;border-top:1px dotted #808080"></div>
<div class="a" style="left:44px;top:448px;width:9px;height:1px;border-top:1px dotted #808080"></div>
<div class="a" style="left:52px;top:428px;width:62px;height:14px;background:#cdccc7"></div>
<div class="t" style="left:53.75px;top:430px;transform:scaleX(0.9613);transform-origin:0 0;">死荷重 (St)</div>
<div class="t" style="left:53.75px;top:442.5px;transform:scaleX(0.9272);transform-origin:0 0;">死荷重 (Non St)</div>

<!-- splitter -->
<div class="vw" style="left:265px;top:116px;height:549px"></div>
<!-- 3D VIEW -->
<div class="a" style="left:266px;top:116px;width:528px;height:550px;border-top:1px solid #fff;border-left:1px solid #a0a0a0;border-right:1px solid #cdccc7;border-bottom:1px solid #cdccc7"></div>
<div class="a" style="left:269px;top:117px;width:523px;height:548px;background:#fff;border:2px solid #101010;border-right-width:1px;border-bottom-width:2px"></div>
<div class="a" style="left:792px;top:117px;width:2px;height:549px;background:#dcdbd6"></div>
<div class="a" style="left:269px;top:665px;width:525px;height:1px;background:#fff"></div>
<!-- axis box -->
<div class="a" style="left:270px;top:119px;width:74px;height:72px;border-right:1px solid #000;border-bottom:1px solid #000"></div>
<svg style="left:270px;top:119px" width="74" height="72"><path d="M37.4 34V15M37.4 34l16 7M37.4 34l-14.5 6.3" stroke="#000" stroke-width="1.3"/><path d="M37.4 12.3l-2 4.5h4z M55 42l-4.8 0.3 1.6-3.8z M20.5 41.5l4.8 0.5-1.6-3.8z" fill="#000"/><g font-size="13.5" font-weight="bold" font-family="Liberation Sans" stroke="#000" stroke-width="0.5"><text x="32.6" y="10.7">Y</text><text x="9.2" y="49.8">Z</text><text x="56" y="49.8">X</text></g></svg>
<!-- mini toolbar -->
<div class="a" style="left:347px;top:120.5px;width:205px;height:23px;background:#cdccc7;border-top:1px solid #fff;border-left:1px solid #fff;border-right:1px solid #808080;border-bottom:1px solid #808080"></div>
<div class="a" style="left:349.5px;top:123px;width:19.5px;height:19px;background:#e6e4de;border-top:1px solid #808080;border-left:1px solid #808080;border-right:1px solid #fff;border-bottom:1px solid #fff"></div>
<svg style="left:356.5px;top:127px" width="9" height="12"><path d="M0.7 0.7V9.5L2.8 7.6 4.6 11 6.2 10.2 4.4 6.8H7.2Z" fill="#fff" stroke="#000" stroke-width="1.1"/></svg>
<svg style="left:371px;top:124px" width="17" height="17" fill="none" stroke="#1f4f9f" stroke-width="1.1"><path d="M2 8.5c0-2 3-3.5 6.5-3.5s6.5 1.5 6.5 3.5-3 3.5-6.5 3.5"/><path d="M8.5 1.5c-2 0-3.5 3-3.5 7s1.5 7 3.5 7 3.5-2 3.5-4"/><path d="M3.5 6.5l-2 2 2 2M10 13.5l2 2 2-2"/><path d="M9 6l3 2-3 2z" fill="#f0d040" stroke="#b09020" stroke-width="0.8"/></svg>
<svg style="left:393.5px;top:124px" width="14" height="17" fill="none" stroke="#1f4f9f" stroke-width="1.1"><path d="M5 2v8M9 2v8M3 4l2-2.5L7 4M7 4l2-2.5L11 4M1 11l6 4 6-4M1 11l1.5 2.5M13 11l-1.5 2.5M7 10v5"/></svg>
<svg style="left:414.5px;top:124px" width="17" height="17" fill="none" stroke="#1f4f9f" stroke-width="1.2"><circle cx="7" cy="7" r="5.5"/><circle cx="6" cy="7" r="2.6" fill="#1f4f9f"/><path d="M9.5 3.5c3 0 5 2 5 4M10.5 11.5l4.5 4.5" stroke-width="1.6"/></svg>
<div class="vl" style="left:435px;top:123px;height:19px"></div><div class="vw" style="left:436px;top:123px;height:19px"></div>
<svg style="left:440px;top:124px" width="17" height="17" fill="none" stroke="#1f4f9f" stroke-width="1.5"><path d="M1 3.8h13M11 1l3.5 2.8L11 6.5M3 11l3 3 3-3"/><circle cx="6" cy="7.5" r="1.5" fill="#1f4f9f" stroke="none"/><circle cx="6" cy="14.5" r="1.6" fill="#1f4f9f" stroke="none"/></svg>
<svg style="left:462px;top:124px" width="17" height="14" fill="none" stroke="#1f4f9f" stroke-width="1.2"><path d="M1 3l13 5" stroke-dasharray="2 1.2"/><path d="M11 5.5l4 3-4.5 1z" fill="#1f4f9f" stroke="none"/><circle cx="5.5" cy="10" r="1.7" fill="#1f4f9f" stroke="none"/></svg>
<svg style="left:483px;top:125px" width="17" height="16"><text x="0.5" y="5.5" font-size="6.2" font-weight="bold" fill="#1f4f9f" font-family="Liberation Sans" textLength="14.5" lengthAdjust="spacingAndGlyphs">INFO</text><path d="M2.5 7v7.5h10.5V9.5H5M13 10l2.5-1v5l-2.5-1" fill="#e8eef8" stroke="#1f4f9f" stroke-width="1.4"/><path d="M4 11c1-2 5-2 6 0" fill="none" stroke="#1f4f9f"/></svg>
<svg style="left:504px;top:125px" width="17" height="16"><text x="0.5" y="5.5" font-size="6.2" font-weight="bold" fill="#1f4f9f" font-family="Liberation Sans" textLength="15" lengthAdjust="spacingAndGlyphs">SHOT</text><path d="M2.5 7v7.5h10.5V9.5H5M13 10l2.5-1v5l-2.5-1" fill="#e8eef8" stroke="#1f4f9f" stroke-width="1.4"/><path d="M4 11c1-2 5-2 6 0" fill="none" stroke="#1f4f9f"/></svg>
<div class="vl" style="left:525px;top:123px;height:19px"></div><div class="vw" style="left:526px;top:123px;height:19px"></div>
<div class="a" style="left:537px;top:130.7px;width:3px;height:3px;border-radius:1px;background:#1f4f9f"></div>
<!-- right mini toolbar -->
<div class="a" style="left:765px;top:120px;width:23px;height:43px;background:#cdccc7;border-top:1px solid #fff;border-left:1px solid #fff;border-right:1px solid #808080;border-bottom:1px solid #808080"></div>
<svg style="left:769px;top:124px" width="16" height="15"><rect x="1" y="5" width="9" height="9" fill="#eee" stroke="#000"/><rect x="5" y="1" width="10" height="9" fill="#222" stroke="#000"/><path d="M8 3v4h5" stroke="#e0c000" fill="none"/></svg>
<svg style="left:769px;top:144px" width="15" height="16" opacity="0.55"><rect x="1" y="1" width="13" height="14" fill="#eee" stroke="#555"/><path d="M3 4h9M3 7h9M3 10h9M3 13h9" stroke="#555"/></svg>

<!-- model line & nodes -->
<svg style="left:0;top:0" width="800" height="690">
<path d="M380.5 322L737 481.2" stroke="#6a6a6a" stroke-width="1"/>
<g fill="#000"><rect x="375.90" y="317.40" width="9.2" height="9.2" rx="2.6" transform="rotate(28 380.50 322.00)"/><rect x="402.70" y="329.37" width="9.2" height="9.2" rx="2.6" transform="rotate(28 407.30 333.97)"/><rect x="431.00" y="342.01" width="9.2" height="9.2" rx="2.6" transform="rotate(28 435.60 346.61)"/><rect x="461.10" y="355.46" width="9.2" height="9.2" rx="2.6" transform="rotate(28 465.70 360.06)"/><rect x="492.90" y="369.66" width="9.2" height="9.2" rx="2.6" transform="rotate(28 497.50 374.26)"/><rect x="526.40" y="384.63" width="9.2" height="9.2" rx="2.6" transform="rotate(28 531.00 389.23)"/><rect x="562.40" y="400.71" width="9.2" height="9.2" rx="2.6" transform="rotate(28 567.00 405.31)"/><rect x="601.40" y="418.13" width="9.2" height="9.2" rx="2.6" transform="rotate(28 606.00 422.73)"/><rect x="641.70" y="436.13" width="9.2" height="9.2" rx="2.6" transform="rotate(28 646.30 440.73)"/><rect x="685.40" y="455.65" width="9.2" height="9.2" rx="2.6" transform="rotate(28 690.00 460.25)"/><rect x="732.30" y="476.60" width="9.2" height="9.2" rx="2.6" transform="rotate(28 736.90 481.20)"/></g>
</svg>

<!-- CONTEXT MENU -->
<div class="a" style="left:493px;top:290px;width:145px;height:261.5px;background:rgba(0,0,0,0.28);box-shadow:0.5px 0.5px 1px rgba(0,0,0,0.2)"></div>
<div class="a" style="left:491px;top:288px;width:145px;height:261px;background:#cdccc7;border-top:1px solid #cdccc7;border-left:1px solid #cdccc7;border-right:1px solid #404040;border-bottom:1px solid #404040"></div>
<div class="a" style="left:492px;top:289px;width:143px;height:259px;border-top:1px solid #fff;border-left:1px solid #fff;border-right:1px solid #808080;border-bottom:1px solid #808080"></div>
<div class="a" style="left:494px;top:335px;width:139px;height:14.5px;background:#123882"></div>
<div class="t" style="left:507.6px;top:291.5px;color:#000;transform:scaleX(0.8616);transform-origin:0 0;">節点荷重の編集...</div><div class="t" style="left:507.6px;top:306.5px;color:#000;transform:scaleX(0.8568);transform-origin:0 0;">節点座標の編集(<u>O</u>)...</div><div class="t" style="left:507.6px;top:321.5px;color:#000;transform:scaleX(0.8671);transform-origin:0 0;">支点条件の設定(<u>P</u>)...</div><div class="t" style="left:507.6px;top:336.5px;color:#fff;transform:scaleX(0.8568);transform-origin:0 0;">節点の規則配置(<u>Q</u>)...</div><div class="ms" style="top:352.5px"></div><div class="t" style="left:507.6px;top:358px;color:#000;transform:scaleX(0.8748);transform-origin:0 0;">節点の削除(<u>S</u>)</div><div class="t" style="left:507.6px;top:373px;color:#000;transform:scaleX(0.8690);transform-origin:0 0;">線要素の一括削除(<u>N</u>)...</div><div class="ms" style="top:389.5px"></div><div class="t" style="left:507.6px;top:395.5px;color:#000;transform:scaleX(0.8940);transform-origin:0 0;">剛体要素の編集(<u>R</u>)</div><svg style="left:625px;top:397.5px" width="4" height="7"><path d="M0 0l4 3.5L0 7z" fill="#000"/></svg><div class="ms" style="top:412.0px"></div><div class="t" style="left:507.6px;top:417.5px;color:#000;transform:scaleX(0.7683);transform-origin:0 0;">全ての「節点」を選択(<u>U</u>)</div><div class="t" style="left:507.6px;top:432.5px;color:#000;transform:scaleX(0.8701);transform-origin:0 0;">直線状に選択(<u>T</u>)</div><div class="t" style="left:507.6px;top:447.5px;color:#000;transform:scaleX(0.7599);transform-origin:0 0;">ハイライト表示(<u>V</u>)</div><div class="ms" style="top:464.5px"></div><div class="t" style="left:507.6px;top:470.5px;color:#000;transform:scaleX(0.8539);transform-origin:0 0;">分解(<u>W</u>)</div><div class="ms" style="top:488.0px"></div><div class="t" style="left:507.6px;top:494px;color:#000;transform:scaleX(0.8799);transform-origin:0 0;">視点位置の保存(<u>X</u>)</div><div class="t" style="left:507.6px;top:508.5px;color:#000;transform:scaleX(0.8799);transform-origin:0 0;">保存位置の表示(<u>Y</u>)</div><svg style="left:625px;top:510.5px" width="4" height="7"><path d="M0 0l4 3.5L0 7z" fill="#000"/></svg><div class="ms" style="top:526.0px"></div><div class="t" style="left:507.6px;top:531.5px;color:#000;transform:scaleX(0.7094);transform-origin:0 0;">プロパティのコピー(<u>Z</u>)</div><svg style="left:565px;top:343px" width="14" height="20"><path d="M0.7 0.7V14.5L4 11.2 6.7 17.2 9.2 16.1 6.5 10.3H11Z" fill="#fff" stroke="#000" stroke-width="1.1"/></svg>

<!-- STATUS BAR -->
<div class="a" style="left:4px;top:668px;width:792px;height:1px;background:#404040"></div>
<div class="a" style="left:4px;top:87px;width:1px;height:581px;background:#fff"></div>
<div class="a" style="left:795px;top:87px;width:1px;height:581px;background:#404040"></div>
<div class="a" style="left:794px;top:88px;width:1px;height:580px;background:#808080"></div>
<div class="a" style="left:5px;top:667px;width:788px;height:1px;background:#808080"></div>
<div class="a" style="left:4px;top:671px;width:92px;height:16px;border-top:1px solid #808080;border-left:1px solid #808080;border-right:1px solid #fff;border-bottom:1px solid #fff"></div>
<div class="t" style="left:9px;top:673px;transform:scaleX(0.7762);transform-origin:0 0;">モード: <span style="color:#1048a0">編集</span></div>
<div class="a" style="left:97px;top:671px;width:616px;height:16px;border-top:1px solid #808080;border-left:1px solid #808080;border-right:1px solid #fff;border-bottom:1px solid #fff"></div>
<div class="a" style="left:714px;top:671px;width:82px;height:16px;border-top:1px solid #808080;border-left:1px solid #808080"></div>
<svg style="left:783px;top:675px" width="12" height="12"><path d="M11.5 0.5L0.5 11.5M11.5 4.5L4.5 11.5M11.5 8.5L8.5 11.5" stroke="#808080" stroke-width="1.3"/><path d="M11.5 -0.5L-0.5 11.5M11.5 3.5L3.5 11.5M11.5 7.5L7.5 11.5" stroke="#fff" stroke-width="0.7"/></svg>
</body></html>
